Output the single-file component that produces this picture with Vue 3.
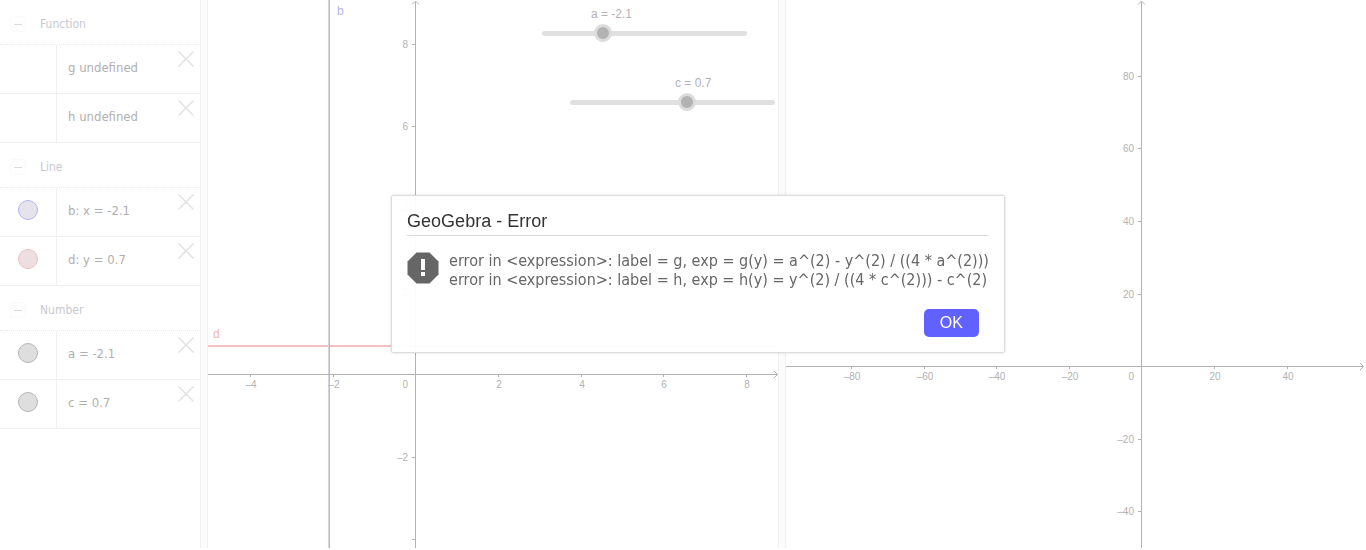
<template>
  <div class="workspace">
    <aside class="algebra">
      <section v-for="group in groups" :key="group.name">
        <header class="group-header">
          <button class="collapse" :aria-label="'Collapse ' + group.name">
            <svg width="16" height="16" viewBox="0 0 16 16">
              <rect x="0.5" y="0.5" width="15" height="15" rx="3" fill="#fefefe" stroke="#fafafa" />
              <path d="M4 8.5h8" stroke="#dcdcdc" />
            </svg>
          </button>
          <span>{{ group.name }}</span>
        </header>
        <div v-for="item in group.items" :key="item.text" class="row">
          <div class="marble-cell">
            <button
              v-if="item.marble"
              class="marble"
              :class="item.marble"
              :aria-label="'Toggle ' + item.text"
            ></button>
          </div>
          <span class="row-text">{{ item.text }}</span>
          <button class="remove" :aria-label="'Delete ' + item.text">
            <svg width="16" height="16" viewBox="0 0 16 16">
              <path d="M0.5 0.5l15 15M15.5 0.5l-15 15" stroke="#e2e2e2" stroke-width="1.5" />
            </svg>
          </button>
        </div>
      </section>
    </aside>

    <div class="splitter"></div>

    <main v-for="(view, i) in views" :key="view.id" class="view" :class="view.id">
      <svg class="plot" width="100%" height="100%">
        <template v-if="view.id === 'graphics'">
          <line x1="0" y1="346" x2="100%" y2="346" stroke="#f2c2c2" stroke-width="2" />
          <rect x="120" y="0" width="1" height="100%" fill="#d4d4e2" />
          <rect x="121" y="0" width="1" height="100%" fill="#b4b4f2" />
          <text x="129" y="15" class="label-b">b</text>
          <text x="5" y="338" class="label-d">d</text>
        </template>

        <g stroke="#b2b2b2" fill="none" shape-rendering="crispEdges">
          <line x1="0" :y1="view.y + 0.5" x2="100%" :y2="view.y + 0.5" />
          <line :x1="view.x + 0.5" y1="2" :x2="view.x + 0.5" y2="100%" />
          <line
            v-for="n in view.xTicks"
            :key="'x' + n"
            :x1="tickX(view, n) + 0.5"
            :y1="view.y"
            :x2="tickX(view, n) + 0.5"
            :y2="view.y + 3"
          />
          <line
            v-for="n in view.yTicks"
            :key="'y' + n"
            :x1="view.x - 3"
            :y1="tickY(view, n) + 0.5"
            :x2="view.x"
            :y2="tickY(view, n) + 0.5"
          />
        </g>
        <g stroke="#b2b2b2" fill="none">
          <path :d="`M${view.x - 3} 4.5l3.5 -3.5l3.5 3.5`" />
          <svg x="100%" :y="view.y" class="arrow">
            <path d="M-4 -3l3.5 3.5l-3.5 3.5" />
          </svg>
        </g>

        <g class="numbers">
          <text
            v-for="n in view.xTicks"
            :key="'tx' + n"
            :x="tickX(view, n) + 1"
            :y="view.y + 14"
            text-anchor="middle"
          >{{ format(n) }}</text>
          <text :x="view.x - 7" :y="view.y + 14" text-anchor="end">0</text>
          <text
            v-for="n in view.yLabels"
            :key="'ty' + n"
            :x="view.x - 7"
            :y="tickY(view, n) + 4"
            text-anchor="end"
          >{{ format(n) }}</text>
        </g>
      </svg>

      <template v-if="view.id === 'graphics'">
        <div v-for="s in sliders" :key="s.name" class="slider" :class="'slider-' + s.name">
          <label :for="'slider-' + s.name" :style="{ paddingLeft: labelOffset(s) + 'px' }">
            {{ s.name }} = {{ s.value }}
          </label>
          <div class="slider-bar">
            <input
              :id="'slider-' + s.name"
              v-model.number="s.value"
              type="range"
              min="-5"
              max="5"
              step="0.1"
            />
          </div>
        </div>
      </template>
      <div v-if="i === 0" class="splitter"></div>
    </main>

    <div v-if="open" class="overlay">
      <div class="dialog" role="alertdialog" aria-labelledby="dialog-title">
        <h1 id="dialog-title" class="dialog-title">GeoGebra - Error</h1>
        <div class="dialog-body">
          <svg class="alert" width="32" height="32" viewBox="0 0 32 32">
            <path d="M9.5 0.5h13l9 9v13l-9 9h-13l-9-9v-13z" fill="#666" />
            <path d="M14 7h4v11h-4zM14 20h4v4h-4z" fill="#fff" />
          </svg>
          <p class="message">
            <span v-for="line in errors" :key="line">{{ line }}</span>
          </p>
        </div>
        <div class="dialog-actions">
          <button class="ok" @click="open = false">OK</button>
        </div>
      </div>
    </div>
  </div>
</template>

<script setup>
import { ref } from 'vue'

const open = ref(true)

const groups = [
  { name: 'Function', items: [{ text: 'g undefined' }, { text: 'h undefined' }] },
  {
    name: 'Line',
    items: [
      { text: 'b: x = -2.1', marble: 'blue' },
      { text: 'd: y = 0.7', marble: 'red' }
    ]
  },
  {
    name: 'Number',
    items: [
      { text: 'a = -2.1', marble: 'gray' },
      { text: 'c = 0.7', marble: 'gray' }
    ]
  }
]

// x and y are the origin inside the view, the units are pixels per 1
const views = [
  {
    id: 'graphics',
    x: 207,
    y: 374,
    xUnit: 41.35,
    yUnit: 41.3,
    xTicks: [-4, -2, 2, 4, 6, 8],
    yTicks: [8, 6, 4, 2, -2, -4],
    yLabels: [8, 6, 4, 2, -2]
  },
  {
    id: 'graphics2',
    x: 355,
    y: 366,
    xUnit: 3.63,
    yUnit: 3.63,
    xTicks: [-80, -60, -40, -20, 20, 40],
    yTicks: [80, 60, 40, 20, -20, -40],
    yLabels: [80, 60, 40, 20, -20, -40]
  }
]

const sliders = ref([
  { name: 'a', value: -2.1 },
  { name: 'c', value: 0.7 }
])

const errors = [
  'error in <expression>: label = g, exp = g(y) = a^(2) - y^(2) / ((4 * a^(2)))',
  'error in <expression>: label = h, exp = h(y) = y^(2) / ((4 * c^(2))) - c^(2)'
]

const tickX = (view, n) => Math.round(view.x + 0.3 + n * view.xUnit)
const tickY = (view, n) => Math.round(view.y + 0.2 - n * view.yUnit)
const format = (n) => (n < 0 ? '–' + -n : String(n))

// the label follows the thumb
const labelOffset = (s) => Math.round((s.value + 5) * 20) - 3
</script>

<style>
body {
  background: #fff;
  overflow: hidden;
}
</style>

<style scoped>
.workspace {
  display: flex;
  box-sizing: border-box;
  min-height: 100vh;
  padding: 0 2px 2px 0;
  font-family: "Liberation Sans", Arial, sans-serif;
}

button {
  padding: 0;
  border: none;
  background: none;
  cursor: pointer;
}

svg {
  display: block;
}

.algebra {
  flex: 0 0 200px;
  font-family: "DejaVu Sans Condensed", "DejaVu Sans", sans-serif;
}

.group-header {
  display: flex;
  align-items: center;
  gap: 14px;
  box-sizing: border-box;
  height: 45px;
  padding: 4px 10px 0;
  border-bottom: 1px dotted #ebebeb;
  font-size: 12px;
  color: #c8c8d0;
}

.row {
  display: flex;
  align-items: flex-start;
  box-sizing: border-box;
  height: 49px;
  border-bottom: 1px solid #f0f0f0;
}

.marble-cell {
  flex: 0 0 57px;
  display: flex;
  justify-content: center;
  box-sizing: border-box;
  height: 48px;
  padding-top: 12px;
  border-right: 1px solid #f0f0f0;
}

.marble {
  width: 20px;
  height: 20px;
  border: 1px solid #b6b6b6;
  border-radius: 50%;
  background: #dedede;
}

.marble.blue {
  border-color: #b4b4f0;
  background: #e6e4ea;
}

.marble.red {
  border-color: #f0c0c0;
  background: #eddfe0;
}

.row-text {
  flex: 1;
  padding-left: 11px;
  font-size: 13px;
  line-height: 46px;
  color: #b0b0b0;
}

.remove {
  margin: 6px 6px 0 0;
}

.splitter {
  flex: 0 0 8px;
  box-sizing: border-box;
  border: 1px solid #f0f0f0;
  border-width: 0 1px;
  background: #fcfcfc;
}

.view {
  position: relative;
  display: flex;
  min-width: 0;
}

.graphics {
  flex: 0 0 578px;
}

.graphics2 {
  flex: 1;
}

.plot {
  flex: 1;
  min-width: 0;
  height: auto;
  overflow: hidden;
}

.arrow {
  overflow: visible;
}

.numbers {
  font-size: 10px;
  fill: #b2b2b2;
}

.label-b,
.label-d {
  font-size: 12px;
  fill: #b3b3ee;
}

.label-d {
  fill: #efb6b6;
}

.slider {
  position: absolute;
  width: 218px;
}

.slider-a {
  left: 328px;
  top: 6px;
}

.slider-c {
  left: 356px;
  top: 75px;
}

.slider label {
  display: block;
  font-size: 12px;
  line-height: 16px;
  color: #b2b2b2;
}

.slider-bar {
  position: relative;
  height: 18px;
  margin-top: 2px;
}

.slider-bar::before {
  content: "";
  position: absolute;
  inset: 7px 7px 6px 6px;
  border-radius: 3px;
  background: #e0e0e0;
}

.slider input {
  position: relative;
  display: block;
  width: 100%;
  height: 18px;
  margin: 0;
  background: none;
  appearance: none;
}

.slider input::-webkit-slider-thumb {
  width: 18px;
  height: 18px;
  border: 3px solid #dcdcde;
  border-radius: 50%;
  background: #b2b2b2;
  appearance: none;
}

.overlay {
  position: fixed;
  inset: 0;
  display: flex;
  align-items: center;
  justify-content: center;
  padding: 0 0 2px 30px;
}

.dialog {
  box-sizing: border-box;
  padding: 15px;
  border: 1px solid #dcdcdc;
  border-radius: 2px;
  background: rgba(255, 255, 255, 0.95);
  box-shadow: 0 0 3px rgba(0, 0, 0, 0.15);
}

.dialog-title {
  margin: 0;
  padding-bottom: 4px;
  border-bottom: 1px solid #dcdcdc;
  font-size: 18px;
  font-weight: normal;
  line-height: 20px;
  color: #333;
}

.dialog-body {
  display: flex;
  align-items: center;
  gap: 10px;
  padding-top: 15px;
}

.alert {
  flex: none;
  margin-bottom: 4px;
}

.message {
  margin: 0;
  font-family: "DejaVu Sans Condensed", "DejaVu Sans", sans-serif;
  font-size: 16px;
  line-height: 19px;
  color: #666;
}

.message span {
  display: block;
  white-space: nowrap;
}

.dialog-actions {
  display: flex;
  justify-content: flex-end;
  padding: 20px 10px 0 0;
}

.ok {
  width: 55px;
  height: 28px;
  border-radius: 5px;
  background: #6161ff;
  font-family: inherit;
  font-size: 16px;
  color: #fff;
}
</style>
